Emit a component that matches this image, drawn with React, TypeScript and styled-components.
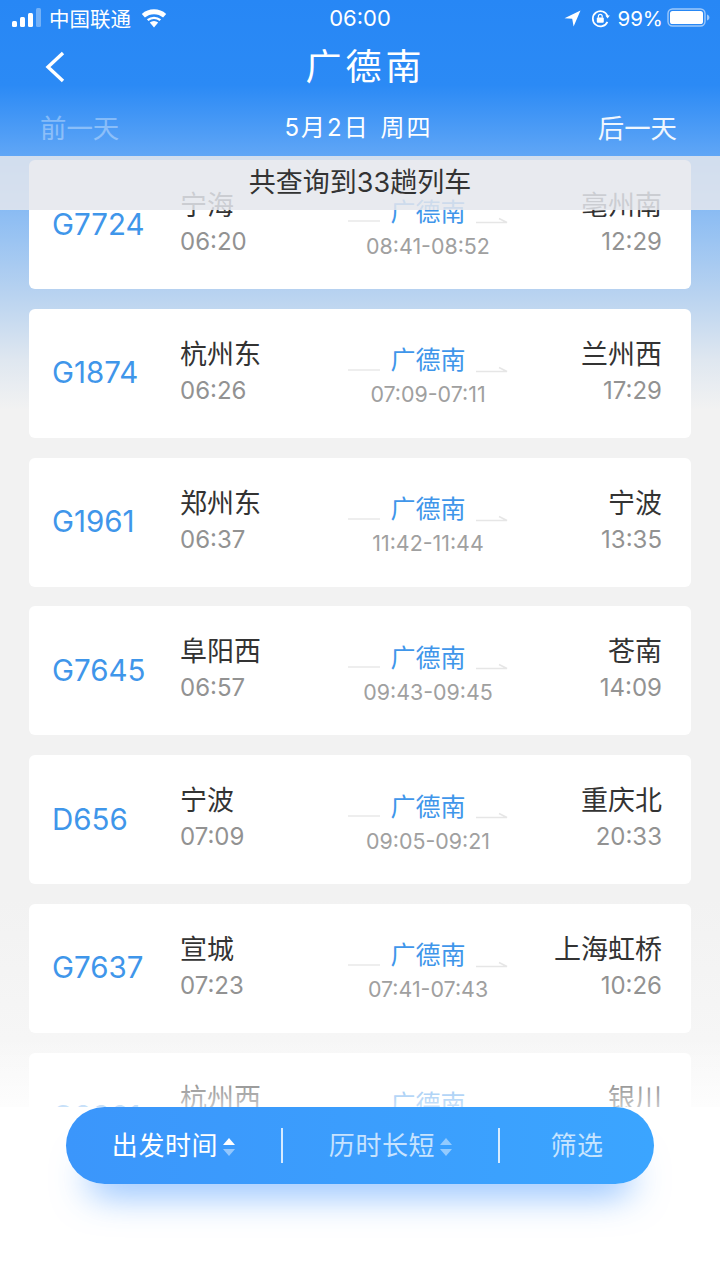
import React from 'react';
import styled, { createGlobalStyle } from 'styled-components';

const GlobalStyle = createGlobalStyle`
  html, body {
    margin: 0;
    padding: 0;
  }
  body {
    font-family: Inter, "Noto Sans CJK SC", sans-serif;
  }
`;

const Page = styled.div`
  position: relative;
  width: 720px;
  height: 1280px;
  overflow: hidden;
  display: flex;
  flex-direction: column;
  background: linear-gradient(
    180deg,
    #2787f5 0,
    #2b8af5 85px,
    #60a6f6 156px,
    #8dbdf3 215px,
    #b7d2f0 292px,
    #dfe7f0 360px,
    #f2f2f2 410px,
    #f2f2f2 900px,
    #f8f8f8 1107px
  );
`;

const Header = styled.header`
  height: 156px;
  flex-shrink: 0;
  display: flex;
  flex-direction: column;
  color: #fff;
`;

const StatusBar = styled.div`
  height: 36px;
  display: grid;
  grid-template-columns: 1fr auto 1fr;
  align-items: center;
  padding: 0 10px 0 12px;
  font-size: 21px;
`;

const StatusLeft = styled.div`
  display: flex;
  align-items: center;
`;

const Carrier = styled.span`
  margin: 0 10px 0 7px;
  font-size: 20.5px;
`;

const StatusTime = styled.span`
  font-size: 22px;
  margin-left: -2px;
`;

const StatusRight = styled.div`
  display: flex;
  align-items: center;
  justify-content: flex-end;
  gap: 10px;
`;

const Battery = styled.span`
  font-size: 20.5px;
  margin: 0 -6px 0 -3px;
`;

const NavBar = styled.div`
  position: relative;
  height: 60px;
  display: flex;
  align-items: center;
  justify-content: center;
`;

const BackIcon = styled.svg`
  position: absolute;
  left: 44px;
  top: 14px;
`;

const Title = styled.h1`
  margin: -5px -4px 0 7px;
  font-size: 36px;
  font-weight: 400;
  letter-spacing: 4px;
`;

const DateRow = styled.div`
  display: flex;
  align-items: center;
  justify-content: space-between;
  padding: 15px 43px 0 40px;
  font-size: 26.4px;
  line-height: 34px;
`;

const DayLink = styled.span<{ $muted?: boolean }>`
  opacity: ${(p) => (p.$muted ? 0.35 : 0.92)};
`;

const DateLabel = styled.span`
  word-spacing: 2px;
  letter-spacing: 2px;
  font-size: 24px;
`;

const Notice = styled.div`
  position: absolute;
  top: 156px;
  left: 0;
  right: 0;
  height: 48px;
  padding-bottom: 6px;
  z-index: 2;
  display: flex;
  align-items: center;
  justify-content: center;
  background: rgba(228, 231, 236, 0.86);
  color: #333;
  font-size: 27px;
`;

const List = styled.main`
  flex: 1;
  min-height: 0;
  display: flex;
  flex-direction: column;
  gap: 19.8px;
  padding: 4px 29px 0;
`;

const Card = styled.article`
  flex-shrink: 0;
  height: 129px;
  display: grid;
  grid-template-columns: 128px 168px 160px 1fr;
  align-items: center;
  padding: 0 29px 0 23px;
  background: #fff;
  border-radius: 6px;
`;

const TrainNo = styled.div`
  font-size: 29.5px;
  color: #3f96ea;
  margin-top: -2px;
`;

const Stop = styled.div<{ $end?: boolean }>`
  display: flex;
  flex-direction: column;
  align-items: ${(p) => (p.$end ? 'flex-end' : 'flex-start')};
  margin-top: -1px;
`;

const StopName = styled.div`
  font-size: 27px;
  line-height: 36px;
  color: #333;
`;

const StopTime = styled.div`
  font-size: 24px;
  line-height: 36px;
  color: #929292;
`;

const Route = styled.div`
  display: flex;
  flex-direction: column;
  align-items: center;
  margin-top: 8px;
`;

const RouteTop = styled.div`
  width: 100%;
  display: flex;
  align-items: center;
  justify-content: space-between;
`;

const RouteName = styled.div`
  font-size: 25px;
  line-height: 34px;
  color: #3f96ea;
`;

const Rail = styled.svg`
  margin-top: 19px;
`;

const RouteTime = styled.div`
  font-size: 21.4px;
  line-height: 34px;
  color: #a0a0a0;
`;

const Footer = styled.footer`
  position: absolute;
  left: 0;
  right: 0;
  bottom: 0;
  height: 173px;
  z-index: 3;
  background: #fff;

  &::before {
    content: '';
    position: absolute;
    left: 0;
    right: 0;
    bottom: 100%;
    height: 70px;
    background: linear-gradient(180deg, rgba(255, 255, 255, 0), rgba(255, 255, 255, 0.72));
  }
`;

const SortBar = styled.nav`
  position: relative;
  width: 588px;
  height: 77px;
  margin: 0 auto;
  display: grid;
  grid-template-columns: 217px 217px 1fr;
  align-items: center;
  border-radius: 39px;
  background: linear-gradient(90deg, #3b96fb, #3ba5ff);
  box-shadow: 0 32px 36px -22px rgba(50, 140, 255, 0.6);
  color: #fff;
  font-size: 26px;
`;

const SortItem = styled.div<{ $active?: boolean; $divider?: boolean }>`
  height: 35px;
  display: flex;
  align-items: center;
  justify-content: center;
  gap: 5px;
  letter-spacing: 0.6px;
  line-height: 31px;
  border-right: ${(p) => (p.$divider ? '2px solid rgba(255, 255, 255, 0.8)' : 'none')};
  color: ${(p) => (p.$active ? '#fff' : 'rgba(255, 255, 255, 0.72)')};
`;

const SortLabel = styled.span`
  margin-top: -1px;
`;

const SortArrows = styled.svg`
  margin-top: 2px;
`;

interface Train {
  no: string;
  from: string;
  depart: string;
  stop: string;
  to: string;
  arrive: string;
}

const trains: Train[] = [
  { no: 'G7724', from: '宁海', depart: '06:20', stop: '08:41-08:52', to: '亳州南', arrive: '12:29' },
  { no: 'G1874', from: '杭州东', depart: '06:26', stop: '07:09-07:11', to: '兰州西', arrive: '17:29' },
  { no: 'G1961', from: '郑州东', depart: '06:37', stop: '11:42-11:44', to: '宁波', arrive: '13:35' },
  { no: 'G7645', from: '阜阳西', depart: '06:57', stop: '09:43-09:45', to: '苍南', arrive: '14:09' },
  { no: 'D656', from: '宁波', depart: '07:09', stop: '09:05-09:21', to: '重庆北', arrive: '20:33' },
  { no: 'G7637', from: '宣城', depart: '07:23', stop: '07:41-07:43', to: '上海虹桥', arrive: '10:26' },
  { no: 'G2361', from: '杭州西', depart: '07:41', stop: '09:02-09:04', to: '银川', arrive: '19:58' },
];

const Signal = () => (
  <svg width="30" height="20" viewBox="0 0 30 20">
    <rect x="0" y="13" width="5" height="6" rx="1.5" fill="#fff" />
    <rect x="8" y="9" width="5" height="10" rx="1.5" fill="#fff" />
    <rect x="16" y="5" width="5" height="14" rx="1.5" fill="#fff" />
    <rect x="24" y="0" width="5" height="19" rx="1.5" fill="#fff" opacity="0.35" />
  </svg>
);

const Wifi = () => (
  <svg width="26" height="20" viewBox="0 0 26 20">
    <path d="M13 19.5 L8.8 14.6 a6.4 6.4 0 0 1 8.4 0 Z" fill="#fff" />
    <path d="M5.9 11.3 L7.5 13.1 a8.6 8.6 0 0 1 11 0 L20.1 11.3 a11 11 0 0 0 -14.2 0 Z" fill="#fff" />
    <path d="M0.8 5.9 L3.9 9.5 a14 14 0 0 1 18.2 0 L25.2 5.9 a18.6 18.6 0 0 0 -24.4 0 Z" fill="#fff" />
  </svg>
);

const Locate = () => (
  <svg width="17" height="17" viewBox="0 0 17 17">
    <path d="M16.5 0.5 L0.5 8.2 L8.2 8.8 L9.6 16.5 Z" fill="#fff" />
  </svg>
);

const RotationLock = () => (
  <svg width="19" height="19" viewBox="0 0 19 19" fill="none">
    <path d="M16.6 7.2 A7.6 7.6 0 1 0 16.4 12.8" stroke="#fff" strokeWidth="1.7" />
    <path d="M18.8 6.4 L14.4 6.4 L16.6 9.6 Z" fill="#fff" />
    <rect x="5.8" y="8.6" width="7" height="5.2" rx="1" fill="#fff" />
    <path d="M7.4 8.8 V7.2 a1.9 1.9 0 0 1 3.8 0 V8.8" stroke="#fff" strokeWidth="1.2" />
  </svg>
);

const BatteryIcon = () => (
  <svg width="43" height="20" viewBox="0 0 43 20" fill="none">
    <rect x="1" y="1" width="37" height="17" rx="4.5" stroke="#fff" strokeOpacity="0.55" strokeWidth="1.4" />
    <rect x="3" y="3" width="33" height="13" rx="2.6" fill="#fff" />
    <path d="M40 6.5 C41.6 7 42.4 8.2 42.4 9.5 C42.4 10.8 41.6 12 40 12.5 Z" fill="#fff" opacity="0.55" />
  </svg>
);

const RailLeft = () => (
  <Rail width="32" height="4" viewBox="0 0 32 4">
    <path d="M0 2 H32" stroke="#e9e9e9" strokeWidth="1.5" />
  </Rail>
);

const RailRight = () => (
  <Rail width="32" height="8" viewBox="0 0 32 8">
    <path d="M0 5.5 H31 L23 1.5" stroke="#e6e6e6" strokeWidth="1.5" fill="none" />
  </Rail>
);

const Arrows: React.FC<{ active?: boolean }> = ({ active }) => (
  <SortArrows width="12" height="20" viewBox="0 0 12 20">
    <path d="M6 1 L12 8 H0 Z" fill="#fff" fillOpacity={active ? 1 : 0.45} />
    <path d="M0 12 H12 L6 19 Z" fill="#fff" fillOpacity="0.45" />
  </SortArrows>
);

const TrainCard: React.FC<{ train: Train }> = ({ train }) => (
  <Card>
    <TrainNo>{train.no}</TrainNo>
    <Stop>
      <StopName>{train.from}</StopName>
      <StopTime>{train.depart}</StopTime>
    </Stop>
    <Route>
      <RouteTop>
        <RailLeft />
        <RouteName>广德南</RouteName>
        <RailRight />
      </RouteTop>
      <RouteTime>{train.stop}</RouteTime>
    </Route>
    <Stop $end>
      <StopName>{train.to}</StopName>
      <StopTime>{train.arrive}</StopTime>
    </Stop>
  </Card>
);

const App: React.FC = () => {
  return (
    <Page>
      <GlobalStyle />
      <Header>
        <StatusBar>
          <StatusLeft>
            <Signal />
            <Carrier>中国联通</Carrier>
            <Wifi />
          </StatusLeft>
          <StatusTime>06:00</StatusTime>
          <StatusRight>
            <Locate />
            <RotationLock />
            <Battery>99%</Battery>
            <BatteryIcon />
          </StatusRight>
        </StatusBar>
        <NavBar>
          <BackIcon width="24" height="34" viewBox="0 0 24 34" fill="none">
            <path d="M19 3 L4 17 L19 31" stroke="#fff" strokeWidth="3.4" />
          </BackIcon>
          <Title>广德南</Title>
        </NavBar>
        <DateRow>
          <DayLink $muted>前一天</DayLink>
          <DateLabel>5月2日 周四</DateLabel>
          <DayLink>后一天</DayLink>
        </DateRow>
      </Header>
      <Notice>共查询到33趟列车</Notice>
      <List>
        {trains.map((t) => (
          <TrainCard key={t.no} train={t} />
        ))}
      </List>
      <Footer>
        <SortBar>
          <SortItem $active $divider>
            <SortLabel>出发时间</SortLabel>
            <Arrows active />
          </SortItem>
          <SortItem $divider>
            <SortLabel>历时长短</SortLabel>
            <Arrows />
          </SortItem>
          <SortItem>
            <SortLabel>筛选</SortLabel>
          </SortItem>
        </SortBar>
      </Footer>
    </Page>
  );
};

export default App;
